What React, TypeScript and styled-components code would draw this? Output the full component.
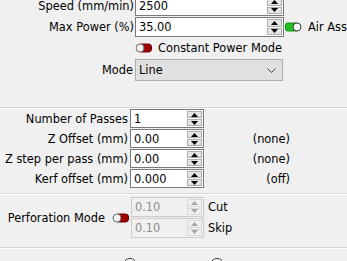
import React from 'react'
import styled, { createGlobalStyle } from 'styled-components'

const GlobalStyle = createGlobalStyle`
    html, body {
        margin: 0;
        padding: 0;
        background: #f0f0f0;
        overflow: hidden;
    }
    body {
        font-family: 'DejaVu Sans', Tahoma, sans-serif;
        font-size: 11.4px;
        color: #000;
    }
`

const Panel = styled.div`
    width: 347px;
    height: 261px;
    overflow: hidden;
    display: flex;
    flex-direction: column;
`

const Section = styled.div<{ $top: number }>`
    display: flex;
    flex-direction: column;
    margin-top: ${p => p.$top}px;
`

const Row = styled.div<{ $h: number; $gap?: number }>`
    display: flex;
    align-items: center;
    height: ${p => p.$h}px;
    margin-top: ${p => p.$gap || 0}px;
    white-space: nowrap;
`

const Label = styled.div<{ $w: number; $pad?: number }>`
    flex: none;
    width: ${p => p.$w}px;
    padding-right: ${p => p.$pad || 0}px;
    box-sizing: border-box;
    text-align: right;
`

const Box = styled.div<{ $w: number; $disabled?: boolean }>`
    flex: none;
    width: ${p => p.$w}px;
    height: 100%;
    box-sizing: border-box;
    border: 1px solid ${p => (p.$disabled ? '#cccccc' : '#7a7a7a')};
    background: ${p => (p.$disabled ? '#f0f0f0' : '#ffffff')};
    color: ${p => (p.$disabled ? '#8d8d8d' : '#000')};
    display: flex;
    align-items: center;
    padding: 1px;
`

const Value = styled.span`
    flex: 1;
    padding-left: 2px;
`

const Spinner = styled.div<{ $disabled?: boolean }>`
    flex: none;
    width: 15px;
    height: 100%;
    box-sizing: border-box;
    display: flex;
    flex-direction: column;
    gap: 1px;
    svg path { fill: ${p => (p.$disabled ? '#a6a6a6' : '#000')}; }
`

const SpinHalf = styled.div<{ $disabled?: boolean }>`
    flex: 1;
    box-sizing: border-box;
    border: 1px solid ${p => (p.$disabled ? '#d9d9d9' : '#adadad')};
    background: ${p => (p.$disabled ? '#f0f0f0' : '#e5e5e5')};
    display: flex;
    align-items: center;
    justify-content: center;
`

const Combo = styled.div<{ $w: number }>`
    flex: none;
    width: ${p => p.$w}px;
    height: 100%;
    box-sizing: border-box;
    border: 1px solid #adadad;
    background: #e1e1e1;
    display: flex;
    align-items: center;
    justify-content: space-between;
    padding: 0 6px 0 3px;
`

const Note = styled.div<{ $w: number }>`
    flex: none;
    width: ${p => p.$w}px;
    text-align: right;
`

const Caption = styled.span<{ $ml: number }>`
    margin-left: ${p => p.$ml}px;
`

const Divider = styled.div<{ $top: number }>`
    flex: none;
    height: 1px;
    margin-top: ${p => p.$top}px;
    background: #d7d7d7;
    border-bottom: 1px solid #ffffff;
`

const Stack = styled.div`
    display: flex;
    flex-direction: column;
    gap: 1px;
    margin-left: 2px;
`

const ToggleWrap = styled.span<{ $ml: number }>`
    display: inline-flex;
    margin-left: ${p => p.$ml}px;
`

const RadioRow = styled.div`
    display: flex;
    gap: 73px;
    padding: 9px 0 0 123px;
`

const Radio = styled.span`
    flex: none;
    width: 14px;
    height: 14px;
    box-sizing: border-box;
    border-radius: 50%;
    border: 1px solid #333;
    background: #fff;
`

const Arrow = ({ up }: { up: boolean }) => (
    <svg width="7" height="4" viewBox="0 0 7 4">
        <path d={up ? 'M0 4 L3.5 0 L7 4 Z' : 'M0 0 L7 0 L3.5 4 Z'} />
    </svg>
)

const SpinBox = ({ w, value, disabled }: { w: number; value: string; disabled?: boolean }) => (
    <Box $w={w} $disabled={disabled}>
        <Value>{value}</Value>
        <Spinner $disabled={disabled}>
            <SpinHalf $disabled={disabled}><Arrow up /></SpinHalf>
            <SpinHalf $disabled={disabled}><Arrow up={false} /></SpinHalf>
        </Spinner>
    </Box>
)

const Toggle = ({ on, ml }: { on: boolean; ml: number }) => (
    <ToggleWrap $ml={ml}>
        <svg width="17" height="10" viewBox="0 0 17 10">
            {on ? (
                <>
                    <rect x="0.5" y="1" width="13" height="8" rx="2" fill="#1fc11f" stroke="#118f11" />
                    <circle cx="12" cy="5" r="4" fill="#ffffff" stroke="#3c3c3c" />
                </>
            ) : (
                <>
                    <rect x="3.5" y="1" width="13" height="8" rx="3" fill="#a10000" stroke="#6a0000" />
                    <circle cx="5" cy="5" r="4" fill="#f4f4f4" stroke="#6e6e6e" />
                </>
            )}
        </svg>
    </ToggleWrap>
)

const Chevron = () => (
    <svg width="9" height="5" viewBox="0 0 9 5">
        <polyline points="0.5,0.5 4.5,4.5 8.5,0.5" fill="none" stroke="#444" strokeWidth="1" />
    </svg>
)

const passes = [
    { label: 'Number of Passes', value: '1', note: '' },
    { label: 'Z Offset (mm)', value: '0.00', note: '(none)' },
    { label: 'Z step per pass (mm)', value: '0.00', note: '(none)' },
    { label: 'Kerf offset (mm)', value: '0.000', note: '(off)' },
]

export default function App() {
    return (
        <Panel>
            <GlobalStyle />
            <Section $top={-4}>
                <Row $h={20}>
                    <Label $w={135} $pad={1}>Speed (mm/min)</Label>
                    <SpinBox w={149} value="2500" />
                </Row>
                <Row $h={20} $gap={1}>
                    <Label $w={135} $pad={1}>Max Power (%)</Label>
                    <SpinBox w={149} value="35.00" />
                    <Toggle on ml={1} />
                    <Caption $ml={6}>Air Assist</Caption>
                </Row>
                <Row $h={22}>
                    <Label $w={135} />
                    <Toggle on={false} ml={0} />
                    <Caption $ml={6}>Constant Power Mode</Caption>
                </Row>
                <Row $h={22}>
                    <Label $w={135} $pad={2}>Mode</Label>
                    <Combo $w={148}>
                        <span>Line</span>
                        <Chevron />
                    </Combo>
                </Row>
            </Section>

            <Divider $top={26} />

            <Section $top={0}>
                {passes.map((p, i) => (
                    <Row key={p.label} $h={19} $gap={i === 0 ? 0 : 1}>
                        <Label $w={130} $pad={2}>{p.label}</Label>
                        <SpinBox w={74} value={p.value} />
                        <Note $w={86}>{p.note}</Note>
                    </Row>
                ))}
            </Section>

            <Divider $top={5} />

            <Section $top={2}>
                <Row $h={41}>
                    <Label $w={105}>Perforation Mode</Label>
                    <Toggle on={false} ml={7} />
                    <Stack>
                        <Row $h={20}>
                            <SpinBox w={73} value="0.10" disabled />
                            <Caption $ml={4}>Cut</Caption>
                        </Row>
                        <Row $h={20}>
                            <SpinBox w={73} value="0.10" disabled />
                            <Caption $ml={4}>Skip</Caption>
                        </Row>
                    </Stack>
                </Row>
            </Section>

            <Divider $top={9} />

            <RadioRow>
                <Radio />
                <Radio />
            </RadioRow>
        </Panel>
    )
}
